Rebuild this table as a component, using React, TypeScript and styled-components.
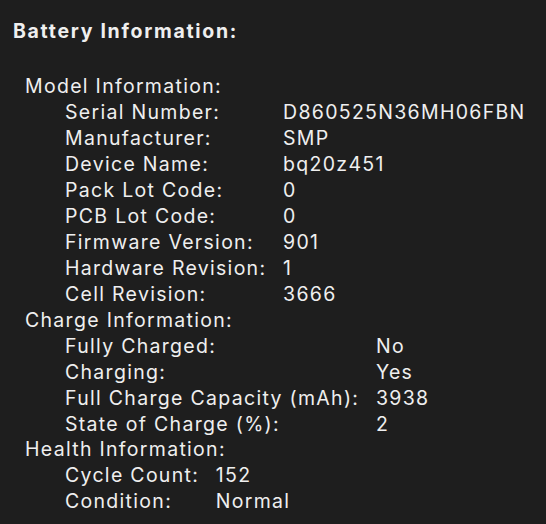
import React from "react";
import styled, { createGlobalStyle } from "styled-components";

const Global = createGlobalStyle`
  html, body { margin: 0; padding: 0; background: #1e1e1e; }
  body { font-family: Inter, "Noto Sans", "Liberation Sans", sans-serif; }
`;

const Page = styled.div`
  width: 546px;
  height: 524px;
  background: #1e1e1e;
  color: #efefef;
  box-sizing: border-box;
  padding: 18.6px 0 0 13px;
  font-size: 19.5px;
  line-height: 25.95px;
  letter-spacing: 1.3px;
  overflow: hidden;
`;

const Heading = styled.div`
  font-weight: 700;
  letter-spacing: 1.7px;
  margin-bottom: 29.6px;
`;

const Section = styled.div`
  padding-left: 12px;
`;

const SectionTitle = styled.div``;

const Grid = styled.div`
  display: grid;
  grid-template-columns: max-content max-content;
  column-gap: 16.7px;
  padding-left: 40px;
`;

const Cell = styled.div`
  white-space: nowrap;
`;

type Row = [string, string];

const sections: { title: string; rows: Row[] }[] = [
  {
    title: "Model Information:",
    rows: [
      ["Serial Number:", "D860525N36MH06FBN"],
      ["Manufacturer:", "SMP"],
      ["Device Name:", "bq20z451"],
      ["Pack Lot Code:", "0"],
      ["PCB Lot Code:", "0"],
      ["Firmware Version:", "901"],
      ["Hardware Revision:", "1"],
      ["Cell Revision:", "3666"],
    ],
  },
  {
    title: "Charge Information:",
    rows: [
      ["Fully Charged:", "No"],
      ["Charging:", "Yes"],
      ["Full Charge Capacity (mAh):", "3938"],
      ["State of Charge (%):", "2"],
    ],
  },
  {
    title: "Health Information:",
    rows: [
      ["Cycle Count:", "152"],
      ["Condition:", "Normal"],
    ],
  },
];

export default function App() {
  return (
    <>
      <Global />
      <Page>
        <Heading>Battery Information:</Heading>
        <Section>
          {sections.map((s) => (
            <React.Fragment key={s.title}>
              <SectionTitle>{s.title}</SectionTitle>
              <Grid>
                {s.rows.map(([k, v]) => (
                  <React.Fragment key={k}>
                    <Cell>{k}</Cell>
                    <Cell>{v}</Cell>
                  </React.Fragment>
                ))}
              </Grid>
            </React.Fragment>
          ))}
        </Section>
      </Page>
    </>
  );
}
